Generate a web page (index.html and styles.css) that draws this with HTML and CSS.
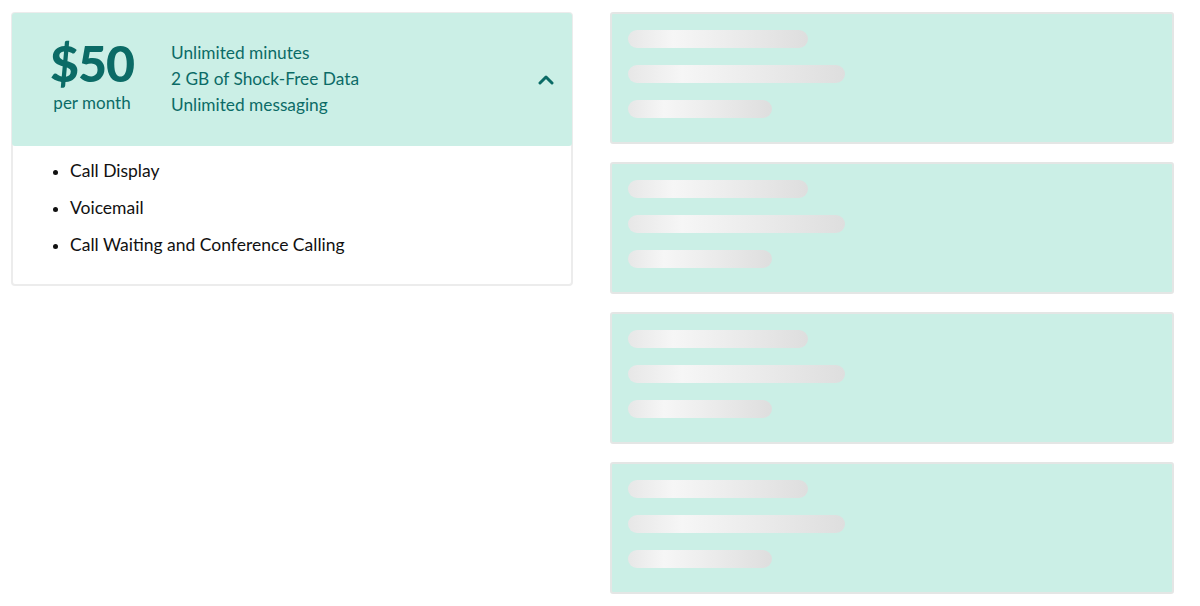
FILE: index.html
```html
<!DOCTYPE html>
<html lang="en">
<head>
  <meta charset="UTF-8" />
  <meta name="viewport" content="width=device-width, initial-scale=1.0" />
  <title>Plans</title>
  <link rel="stylesheet" href="styles.css">
</head>
<body>
  <div class="plans">
    <div class="plan-card">
      <div class="plan-head">
        <div class="price">
          <span class="amount">$50</span>
          <span class="period">per month</span>
        </div>
        <ul class="features">
          <li>Unlimited minutes</li>
          <li>2 GB of Shock-Free Data</li>
          <li>Unlimited messaging</li>
        </ul>
        <button class="toggle" aria-label="Collapse">
          <svg width="16" height="11" viewBox="0 0 16 11"><path d="M2 9 L8 3 L14 9" fill="none" stroke="#0b6b66" stroke-width="3" stroke-linecap="round" stroke-linejoin="round"/></svg>
        </button>
      </div>
      <ul class="extras">
        <li>Call Display</li>
        <li>Voicemail</li>
        <li>Call Waiting and Conference Calling</li>
      </ul>
    </div>

    <div class="skeletons">
      <div class="skeleton-card">
        <span class="bar bar-a"></span>
        <span class="bar bar-b"></span>
        <span class="bar bar-c"></span>
      </div>
      <div class="skeleton-card">
        <span class="bar bar-a"></span>
        <span class="bar bar-b"></span>
        <span class="bar bar-c"></span>
      </div>
      <div class="skeleton-card">
        <span class="bar bar-a"></span>
        <span class="bar bar-b"></span>
        <span class="bar bar-c"></span>
      </div>
      <div class="skeleton-card">
        <span class="bar bar-a"></span>
        <span class="bar bar-b"></span>
        <span class="bar bar-c"></span>
      </div>
    </div>
  </div>
</body>
</html>
```

FILE: styles.css
```css
* {
  box-sizing: border-box;
}
body {
  margin: 0;
  padding: 12px 26px 0 11px;
  background: #fff;
  font-family: 'Lato', 'Liberation Sans', sans-serif;
}
.plans {
  display: grid;
  grid-template-columns: 562px 564px;
  gap: 37px;
  align-items: start;
}
.plan-card {
  border: 2px solid #ececec;
  border-radius: 4px;
  background: #fff;
  padding-bottom: 21px;
}
.plan-head {
  display: flex;
  align-items: center;
  background: #cbefe6;
  border-radius: 3px;
  margin: -1px -1px 0 -1px;
  height: 133px;
  padding: 0 16px 0 36px;
  color: #0b6b66;
}
.price {
  display: flex;
  flex-direction: column;
  align-items: center;
  width: 88px;
  margin-top: -8px;
}
.amount {
  font-size: 50px;
  font-weight: 900;
  line-height: 50px;
  letter-spacing: -1px;
}
.period {
  font-size: 17px;
  line-height: 20px;
  margin-top: 5px;
}
.features {
  list-style: none;
  margin: -2px 0 0 35px;
  padding: 0;
  flex: 1;
  font-size: 17.3px;
  line-height: 26px;
}
.toggle {
  border: none;
  background: none;
  padding: 0;
  width: 20px;
  height: 20px;
  display: flex;
  align-items: center;
  justify-content: center;
  margin-top: -1px;
}
.extras {
  margin: 0;
  padding: 6px 0 0 56px;
  font-size: 17.5px;
  line-height: 37px;
  color: #111;
}
.extras li {
  padding-left: 1px;
}
.extras li::marker {
  font-size: 14px;
}
.skeletons {
  display: flex;
  flex-direction: column;
  gap: 18px;
}
.skeleton-card {
  height: 132px;
  background: #cbefe6;
  border: 2px solid #e4e6e5;
  border-radius: 3px;
  padding: 16px 16px;
  display: flex;
  flex-direction: column;
  gap: 17px;
}
.bar {
  display: block;
  height: 18px;
  border-radius: 9px;
  background: linear-gradient(90deg, #e7e7e7 0%, #f6f6f6 25%, #ebebeb 60%, #dedede 100%);
}
.bar-a {
  width: 180px;
}
.bar-b {
  width: 217px;
}
.bar-c {
  width: 144px;
}
```
